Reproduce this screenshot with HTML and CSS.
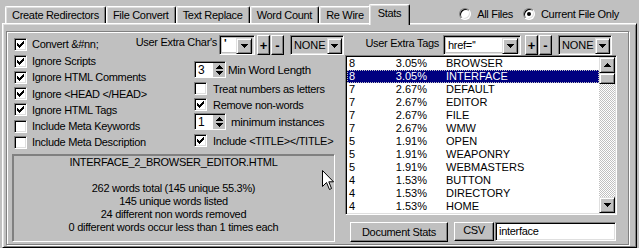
FILE: index.html
```html
<!DOCTYPE html>
<html>
<head>
<meta charset="utf-8">
<link rel="stylesheet" href="styles.css">
</head>
<body>
<div class="app">
  <div class="topbar">
    <div class="tabs">
      <div class="tab">Create Redirectors</div>
      <div class="tab">File Convert</div>
      <div class="tab">Text Replace</div>
      <div class="tab">Word Count</div>
      <div class="tab">Re Wire</div>
      <div class="tab active">Stats</div>
    </div>
    <div class="radios">
      <div class="radio"><span class="rb"></span><span>All Files</span></div>
      <div class="radio"><span class="rb on"></span><span>Current File Only</span></div>
    </div>
  </div>
  <div class="panel">
    <div class="frame">
      <div class="left">
        <div class="toprow">
          <div class="chk"><span class="cb on"><svg width="7" height="7" viewBox="0 0 7 7"><path d="M0 2h1v1h1v1h1v-1h1v-1h1v-1h1v-1h1v3h-1v1h-1v1h-1v1h-1v1h-1v-1h-1v-1h-1z"/></svg></span>Convert &amp;#nn;</div>
          <div class="extras">
            <span class="lbl">User Extra Char's</span>
            <div class="combo c-char"><span class="val">'</span><span class="ddbtn"><svg width="7" height="4" viewBox="0 0 7 4"><path d="M0 0h7v1h-1v1h-1v1h-1v1h-1v-1h-1v-1h-1v-1h-1z"/></svg></span></div>
            <div class="pm"><span class="btn">+</span><span class="btn">-</span></div>
            <div class="combo c-none"><span class="val">NONE</span><span class="ddbtn"><svg width="7" height="4" viewBox="0 0 7 4"><path d="M0 0h7v1h-1v1h-1v1h-1v1h-1v-1h-1v-1h-1v-1h-1z"/></svg></span></div>
          </div>
        </div>
        <div class="body">
          <div class="checks">
            <div class="chk"><span class="cb on"><svg width="7" height="7" viewBox="0 0 7 7"><path d="M0 2h1v1h1v1h1v-1h1v-1h1v-1h1v-1h1v3h-1v1h-1v1h-1v1h-1v1h-1v-1h-1v-1h-1z"/></svg></span>Ignore Scripts</div>
            <div class="chk"><span class="cb on"><svg width="7" height="7" viewBox="0 0 7 7"><path d="M0 2h1v1h1v1h1v-1h1v-1h1v-1h1v-1h1v3h-1v1h-1v1h-1v1h-1v1h-1v-1h-1v-1h-1z"/></svg></span>Ignore HTML Comments</div>
            <div class="chk"><span class="cb on"><svg width="7" height="7" viewBox="0 0 7 7"><path d="M0 2h1v1h1v1h1v-1h1v-1h1v-1h1v-1h1v3h-1v1h-1v1h-1v1h-1v1h-1v-1h-1v-1h-1z"/></svg></span>Ignore &lt;HEAD &lt;/HEAD&gt;</div>
            <div class="chk"><span class="cb on"><svg width="7" height="7" viewBox="0 0 7 7"><path d="M0 2h1v1h1v1h1v-1h1v-1h1v-1h1v-1h1v3h-1v1h-1v1h-1v1h-1v1h-1v-1h-1v-1h-1z"/></svg></span>Ignore HTML Tags</div>
            <div class="chk"><span class="cb"></span>Include Meta Keywords</div>
            <div class="chk"><span class="cb"></span>Include Meta Description</div>
          </div>
          <div class="mid">
            <div class="spinrow s1">
              <div class="spin"><span class="sval">3</span><span class="arrows"><svg width="7" height="4" viewBox="0 0 7 4"><path d="M3 0h1v1h1v1h1v1h1v1h-7v-1h1v-1h1v-1h1z"/></svg><svg width="7" height="4" viewBox="0 0 7 4"><path d="M0 0h7v1h-1v1h-1v1h-1v1h-1v-1h-1v-1h-1v-1h-1z"/></svg></span></div>
              <span class="slbl">Min Word Length</span>
            </div>
            <div class="chk m1"><span class="cb"></span>Treat numbers as letters</div>
            <div class="chk m2"><span class="cb on"><svg width="7" height="7" viewBox="0 0 7 7"><path d="M0 2h1v1h1v1h1v-1h1v-1h1v-1h1v-1h1v3h-1v1h-1v1h-1v1h-1v1h-1v-1h-1v-1h-1z"/></svg></span>Remove non-words</div>
            <div class="spinrow s2">
              <div class="spin"><span class="sval">1</span><span class="arrows"><svg width="7" height="4" viewBox="0 0 7 4"><path d="M3 0h1v1h1v1h1v1h1v1h-7v-1h1v-1h1v-1h1z"/></svg><svg width="7" height="4" viewBox="0 0 7 4"><path d="M0 0h7v1h-1v1h-1v1h-1v1h-1v-1h-1v-1h-1v-1h-1z"/></svg></span></div>
              <span class="slbl wide">minimum instances</span>
            </div>
            <div class="chk m3"><span class="cb on"><svg width="7" height="7" viewBox="0 0 7 7"><path d="M0 2h1v1h1v1h1v-1h1v-1h1v-1h1v-1h1v3h-1v1h-1v1h-1v1h-1v1h-1v-1h-1v-1h-1z"/></svg></span>Include &lt;TITLE&gt;&lt;/TITLE&gt;</div>
          </div>
        </div>
        <div class="info">
          <div class="line">INTERFACE_2_BROWSER_EDITOR.HTML</div>
          <div class="line">&nbsp;</div>
          <div class="line">262 words total (145 unique 55.3%)</div>
          <div class="line">145 unique words listed</div>
          <div class="line">24 different non words removed</div>
          <div class="line">0 different words occur less than 1 times each</div>
          <svg class="cursor" width="13" height="21" viewBox="0 0 13 21"><path d="M0.5 0.5V16.5L4.5 12.5L7.5 19.5L9.5 18.5L6.8 11.8H11.5Z" fill="#fff" stroke="#000" stroke-width="1" stroke-linejoin="miter"/></svg>
        </div>
      </div>
      <div class="right">
        <div class="toprow r">
          <span class="lbl">User Extra Tags</span>
          <div class="combo c-tags"><span class="val white">href=''</span><span class="ddbtn"><svg width="7" height="4" viewBox="0 0 7 4"><path d="M0 0h7v1h-1v1h-1v1h-1v1h-1v-1h-1v-1h-1v-1h-1z"/></svg></span></div>
          <div class="pm"><span class="btn">+</span><span class="btn">-</span></div>
          <div class="combo c-none"><span class="val">NONE</span><span class="ddbtn"><svg width="7" height="4" viewBox="0 0 7 4"><path d="M0 0h7v1h-1v1h-1v1h-1v1h-1v-1h-1v-1h-1v-1h-1z"/></svg></span></div>
        </div>
        <div class="list">
          <div class="rows">
            <div class="row"><span>8</span><span class="pct">3.05%</span><span class="w">BROWSER</span></div>
            <div class="row sel"><span>8</span><span class="pct">3.05%</span><span class="w">INTERFACE</span></div>
            <div class="row"><span>7</span><span class="pct">2.67%</span><span class="w">DEFAULT</span></div>
            <div class="row"><span>7</span><span class="pct">2.67%</span><span class="w">EDITOR</span></div>
            <div class="row"><span>7</span><span class="pct">2.67%</span><span class="w">FILE</span></div>
            <div class="row"><span>7</span><span class="pct">2.67%</span><span class="w">WMW</span></div>
            <div class="row"><span>5</span><span class="pct">1.91%</span><span class="w">OPEN</span></div>
            <div class="row"><span>5</span><span class="pct">1.91%</span><span class="w">WEAPONRY</span></div>
            <div class="row"><span>5</span><span class="pct">1.91%</span><span class="w">WEBMASTERS</span></div>
            <div class="row"><span>4</span><span class="pct">1.53%</span><span class="w">BUTTON</span></div>
            <div class="row"><span>4</span><span class="pct">1.53%</span><span class="w">DIRECTORY</span></div>
            <div class="row"><span>4</span><span class="pct">1.53%</span><span class="w">HOME</span></div>
          </div>
          <div class="vscroll">
            <span class="sbtn"><svg width="7" height="4" viewBox="0 0 7 4"><path d="M3 0h1v1h1v1h1v1h1v1h-7v-1h1v-1h1v-1h1z"/></svg></span>
            <span class="thumb"></span>
            <span class="track"></span>
            <span class="sbtn"><svg width="7" height="4" viewBox="0 0 7 4"><path d="M0 0h7v1h-1v1h-1v1h-1v1h-1v-1h-1v-1h-1v-1h-1z"/></svg></span>
          </div>
        </div>
        <div class="bottomrow">
          <div class="pbtn docstats">Document Stats</div>
          <div class="pbtn csv">CSV</div>
          <div class="field">interface</div>
        </div>
      </div>
    </div>
  </div>
</div>
</body>
</html>
```
FILE: styles.css
```css
* { box-sizing: border-box; }
html, body { margin: 0; padding: 0; }
body {
  background: #c0c0c0;
  font-family: "Liberation Sans", Arial, sans-serif;
  font-size: 11px;
  letter-spacing: -0.3px;
  color: #000;
  width: 639px;
  height: 248px;
  overflow: hidden;
}
svg { display: block; shape-rendering: crispEdges; }
.app { width: 639px; height: 248px; }

/* top bar */
.topbar { height: 23px; display: flex; justify-content: space-between; padding-left: 5px; }
.tabs { display: flex; align-items: flex-end; height: 23px; }
.tab {
  height: 17px;
  padding: 0 6px;
  line-height: 17px;
  border-top: 1px solid #fff;
  border-left: 1px solid #fff;
  border-right: 1px solid #000;
  border-radius: 2px 2px 0 0;
  box-shadow: inset -1px 0 0 #808080, inset 1px 1px 0 #dfdfdf;
  white-space: nowrap;
}
.tab.active {
  position: relative;
  z-index: 2;
  height: 21px;
  margin: 0 -2px -2px -2px;
  padding: 0 8px;
  line-height: 17px;
  background: #c0c0c0;
}
.radios { display: flex; align-items: center; margin-top: 8px; height: 12px; padding-right: 20px; }
.radio { display: flex; align-items: center; gap: 6px; margin-left: 10px; }
.rb {
  width: 12px; height: 12px; border-radius: 50%;
  background: #fff;
  border: 1px solid; border-color: #808080 #fff #fff #808080;
  box-shadow: inset 1px 1px 0 #000, inset -1px -1px 0 #dfdfdf;
  display: flex; align-items: center; justify-content: center;
}
.rb.on::after { content: ""; width: 4px; height: 4px; border-radius: 50%; background: #000; }

/* panel */
.panel {
  margin-left: 2px;
  width: 635px;
  height: 225px;
  border-top: 1px solid #fff;
  border-left: 1px solid #fff;
  border-right: 1px solid #000;
  border-bottom: 1px solid #000;
  box-shadow: inset 1px 1px 0 #dfdfdf, inset -1px -1px 0 #808080;
  padding: 7px 7px 2px 3px;
}
.frame {
  height: 100%;
  border: 1px solid #808080;
  box-shadow: inset 1px 1px 0 #fff, 1px 1px 0 #fff;
  display: flex;
  padding: 3px 0 0 1px;
}
.left { width: 337px; display: flex; flex-direction: column; }
.right { width: 283px; display: flex; flex-direction: column; }

.toprow { height: 18px; display: flex; justify-content: space-between; align-items: flex-start; padding-left: 6px; padding-right: 1px; }
.toprow > .chk { height: 18px; }
.toprow.r { height: 20px; justify-content: flex-end; padding: 0 16px 0 0; }
.extras { display: flex; align-items: flex-start; height: 20px; }
.lbl { line-height: 14px; margin-right: 2px; white-space: nowrap; }
.toprow.r .lbl { line-height: 16px; margin-right: 4px; }

/* checkbox */
.chk { display: flex; align-items: center; gap: 5px; white-space: nowrap; }
.cb {
  width: 13px; height: 13px; flex: none;
  background: #fff;
  border: 1px solid; border-color: #808080 #fff #fff #808080;
  box-shadow: inset 1px 1px 0 #000, inset -1px -1px 0 #dfdfdf;
  display: flex; align-items: center; justify-content: center;
}

/* combos & buttons */
.combo {
  height: 20px;
  display: flex;
  border: 1px solid; border-color: #808080 #fff #fff #808080;
  box-shadow: inset 1px 1px 0 #000, inset -1px -1px 0 #dfdfdf;
  padding: 2px;
}
.combo .val { flex: 1; background: #fff; line-height: 14px; padding-left: 2px; white-space: nowrap; }
.c-char { width: 36px; }
.c-char .val { line-height: 10px; font-weight: bold; }
.c-tags { width: 78px; }
.c-none { width: 54px; margin-left: 6px; padding: 2px 1px 2px 2px; }
.c-none .val { background: #c0c0c0; font-size: 11px; letter-spacing: -0.1px; line-height: 15px; padding-left: 1px; }
.c-none .ddbtn { width: 15px; }
.ddbtn {
  width: 16px; height: 16px; flex: none;
  display: flex; align-items: center; justify-content: center;
  border: 1px solid; border-color: #dfdfdf #000 #000 #dfdfdf;
  box-shadow: inset 1px 1px 0 #fff, inset -1px -1px 0 #808080;
  background: #c0c0c0;
}
.pm { display: flex; margin-left: 2px; gap: 1px; }
.toprow.r .pm { margin-left: 4px; }
.btn {
  width: 13px; height: 20px;
  display: flex; align-items: center; justify-content: center;
  border: 1px solid; border-color: #fff #000 #000 #fff;
  box-shadow: inset -1px -1px 0 #808080;
  font-weight: bold; font-size: 13px; letter-spacing: 0;
}

/* body columns */
.body { display: flex; padding-left: 6px; }
.checks { width: 180px; }
.checks .chk { height: 16.25px; }
.mid { padding-top: 8px; width: 150px; }
.spinrow { display: flex; align-items: center; height: 17px; }
.spin {
  display: flex; width: 32px; height: 17px;
  border: 1px solid; border-color: #808080 #fff #fff #808080;
  box-shadow: inset 1px 1px 0 #000;
  padding: 1px 0 0 1px;
}
.sval { width: 17px; background: #fff; line-height: 14px; padding-left: 2px; font-size: 12px; }
.arrows { flex: 1; display: flex; flex-direction: column; align-items: center; justify-content: space-evenly; border-left: 1px solid #c0c0c0; }
.slbl { margin-left: 2px; font-size: 11.5px; }
.slbl.wide { margin-left: 5px; }
.s1 { margin-bottom: 4px; }
.m1 { height: 13px; margin-bottom: 3px; gap: 6px; }
.m2 { height: 13px; margin-bottom: 2px; gap: 6px; }
.s2 { margin-bottom: 4px; }
.m3 { height: 13px; gap: 6px; }

/* info box */
.info {
  position: relative;
  margin: 3.5px 0 0 4px;
  width: 323px;
  height: 88px;
  border: 1px solid; border-color: #808080 #fff #fff #808080;
  box-shadow: inset 1px 1px 0 #808080;
  text-align: center;
  padding-top: 1px;
}
.line { line-height: 13px; font-size: 11px; }
.cursor { position: absolute; left: 309px; top: 15px; shape-rendering: auto; }

/* list */
.list {
  height: 160px;
  width: 272px;
  display: flex;
  border: 1px solid; border-color: #808080 #fff #fff #808080;
  box-shadow: inset 1px 1px 0 #000, inset -1px -1px 0 #dfdfdf;
  padding: 1px;
}
.rows { flex: 1; background: #fff; }
.row {
  display: grid;
  grid-template-columns: 38px 40px 1fr;
  height: 13px; line-height: 13px;
  padding-left: 2px;
  font-size: 11px;
  letter-spacing: 0;
}
.row .pct { text-align: right; }
.row .w { padding-left: 19px; }
.row.sel { background: #000080; color: #fff; outline: 1px dotted #c0c0c0; outline-offset: -1px; }
.vscroll { width: 16px; display: flex; flex-direction: column; }
.sbtn, .thumb {
  width: 16px; height: 16px; flex: none;
  display: flex; align-items: center; justify-content: center;
  background: #c0c0c0;
  border: 1px solid; border-color: #dfdfdf #000 #000 #dfdfdf;
  box-shadow: inset 1px 1px 0 #fff, inset -1px -1px 0 #808080;
}
.thumb { height: 11px; }
.track { flex: 1; background: repeating-conic-gradient(#c0c0c0 0 25%, #fff 0 50%) 0 0 / 2px 2px; }

/* bottom row */
.bottomrow { display: flex; align-items: flex-start; margin-top: 7px; padding-left: 5px; }
.pbtn {
  height: 20px;
  display: flex; align-items: center; justify-content: center;
  border: 1px solid; border-color: #fff #000 #000 #fff;
  box-shadow: inset -1px -1px 0 #808080;
  font-size: 11px;
}
.docstats { width: 98px; }
.csv { width: 40px; margin-left: 6px; height: 19px; align-items: flex-start; line-height: 14px; }
.field {
  width: 121px; height: 19px; margin-left: 1px;
  background: #fff;
  border: 1px solid; border-color: #808080 #fff #fff #808080;
  box-shadow: inset 1px 1px 0 #000, inset -1px -1px 0 #dfdfdf;
  padding-left: 3px; line-height: 17px; font-size: 11px;
}
```
